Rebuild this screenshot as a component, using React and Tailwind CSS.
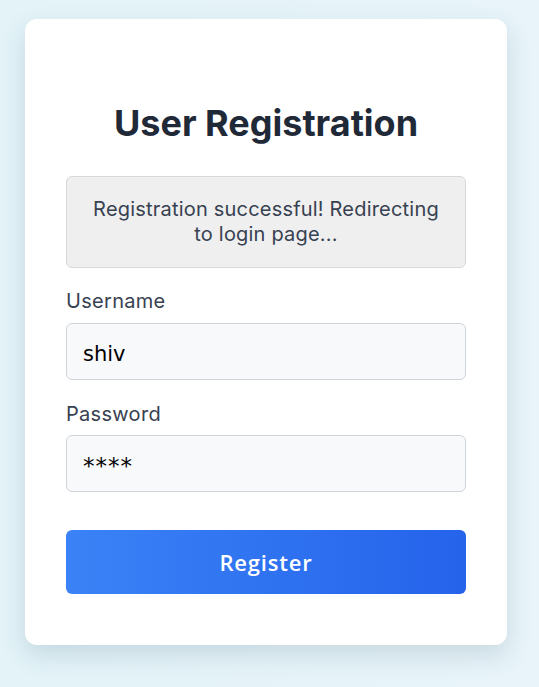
export default function App() {
  return (
    <div className="min-h-[687px] w-full bg-gradient-to-r from-[#e3f3f8] to-[#e8f4f9] pt-[19px]"
      style={{ fontFamily: 'Inter, "Liberation Sans", sans-serif' }}>
      <div className="ml-[25px] w-[482px] bg-white rounded-xl shadow-[0_10px_25px_rgba(60,100,120,0.18)] px-[41px] pt-[82px] pb-[51px]">
        <h1 className="text-[36px] leading-[44px] font-bold text-[#1f2937] text-center">User Registration</h1>

        <div className="mt-[31px] h-[92px] flex items-center justify-center px-5 bg-[#efefef] border border-[#d8d8d8] rounded-md text-[20px] leading-[25px] tracking-[0.2px] text-[#374151] text-center">
          Registration successful! Redirecting to login page...
        </div>

        <form className="mt-[19px]" onSubmit={e => e.preventDefault()}>
          <label className="block text-[20px] leading-[28px] tracking-[0.3px] text-[#374151]">Username</label>
          <input type="text" defaultValue="shiv"
            className="mt-[8px] block w-full h-[57px] px-4 pt-[5px] bg-[#f8f9fa] border border-[#ced4da] rounded-md text-[21px] text-black focus:outline-none"
            style={{ fontFamily: '"DejaVu Sans", sans-serif' }} />

          <label className="mt-[20px] block text-[20px] leading-[28px] tracking-[0.3px] text-[#374151]">Password</label>
          <input type="text" defaultValue="****"
            className="mt-[7px] block w-full h-[57px] px-4 pt-[4px] bg-[#f8f9fa] border border-[#ced4da] rounded-md text-[23px] tracking-[1px] text-black focus:outline-none"
            style={{ fontFamily: '"DejaVu Sans", sans-serif' }} />

          <button type="submit"
            className="mt-[38px] w-full h-[64px] rounded-md bg-gradient-to-r from-[#3b82f6] to-[#2563eb] text-white text-[22px] tracking-[0.8px] font-semibold"
            style={{ fontFamily: '"Open Sans", sans-serif' }}>
            Register
          </button>
        </form>
      </div>
    </div>
  )
}
